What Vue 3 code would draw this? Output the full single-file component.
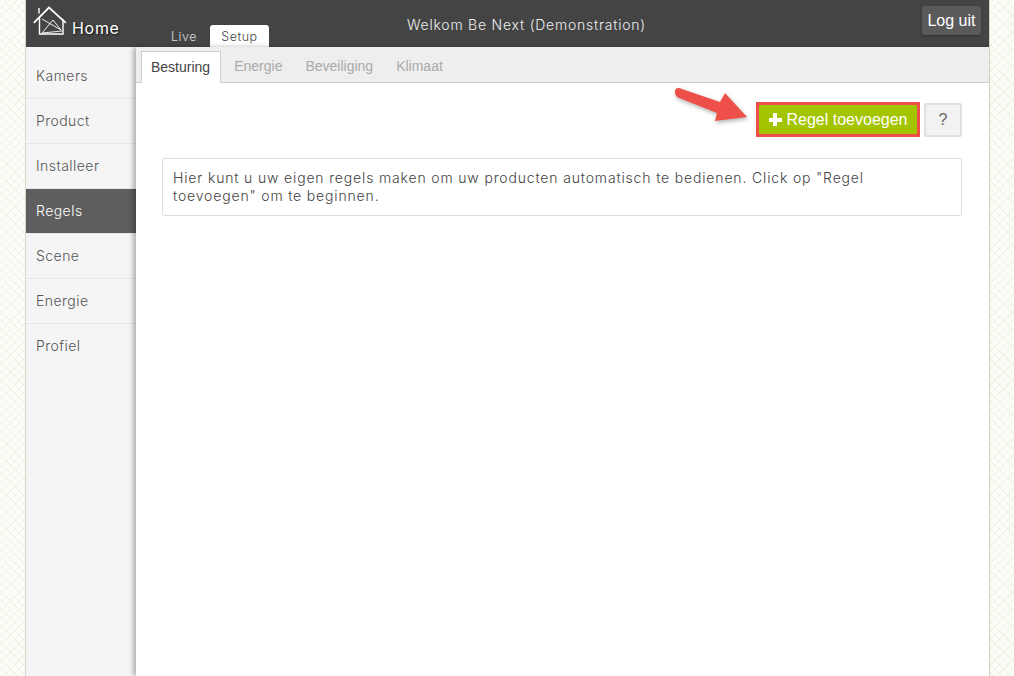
<script setup>
const navItems = ['Kamers', 'Product', 'Installeer', 'Regels', 'Scene', 'Energie', 'Profiel']
const subTabs = ['Besturing', 'Energie', 'Beveiliging', 'Klimaat']
</script>

<template>
  <div class="page">
    <div class="shell">
      <header class="topbar">
        <div class="brand">
          <svg class="logo" width="34" height="36" viewBox="0 0 34 36" fill="none" stroke="#fff">
            <path d="M0.800 22.800 16 7.500 32.800 22.800" stroke-width="1.800" />
            <path d="M6.500 17.500V34H30V19" stroke-width="1.400" />
            <path d="M6 8V13.500" stroke-width="1.400" />
            <path d="M9 19 28 30 20 20 9 33 29 31" stroke-width="0.900" />
          </svg>
          <span class="brand-name">Home</span>
        </div>
        <nav class="modes">
          <span class="mode">Live</span>
          <span class="mode active">Setup</span>
        </nav>
        <div class="welcome">Welkom Be Next (Demonstration)</div>
        <button class="logout">Log uit</button>
      </header>
      <div class="body">
        <aside class="side">
          <a v-for="item in navItems" :key="item" class="side-item" :class="{ active: item === 'Regels' }">{{ item }}</a>
        </aside>
        <main class="main">
          <div class="tabs">
            <span v-for="(t, i) in subTabs" :key="t" class="tab" :class="{ active: i === 0 }">{{ t }}</span>
          </div>
          <div class="content">
            <div class="actions">
              <button class="add"><span class="plus"></span>Regel toevoegen</button>
              <button class="help">?</button>
            </div>
            <div class="info">Hier kunt u uw eigen regels maken om uw producten automatisch te bedienen. Click op "Regel toevoegen" om te beginnen.</div>
          </div>
          <svg class="arrow" width="84" height="44" viewBox="0 0 84 44">
            <path d="M5 6 Q5.500 2.500 9 3 L50 17 L55 8 L77 32 L45 36 L47 28 L8 12.500 Q4.500 10 5 6Z" fill="#ee4f49" />
          </svg>
        </main>
      </div>
    </div>
  </div>
</template>

<style>
html, body { margin: 0; overflow: hidden; }
</style>

<style scoped>
.page {
  height: 676px;
  overflow: hidden;
  background-color: #fbfdf8;
  background-image:
    repeating-linear-gradient(45deg, #f0f5e8 0 1px, transparent 1px 6px),
    repeating-linear-gradient(-45deg, #f0f5e8 0 1px, transparent 1px 6px);
  font-family: Inter, sans-serif;
  font-weight: 300;
  font-size: 14px;
  color: #444;
}
.shell {
  box-sizing: border-box;
  width: 965px;
  height: 676px;
  margin-left: 25px;
  border-left: 1px solid #d3d8cd;
  border-right: 1px solid #d3d8cd;
  display: flex;
  flex-direction: column;
  background: #f5f5f5;
}
.topbar {
  height: 47px;
  flex: none;
  background: #444;
  display: flex;
  align-items: flex-start;
  position: relative;
  color: #fff;
}
.brand {
  width: 136px;
  flex: none;
  display: flex;
  align-items: flex-start;
  padding-left: 7px;
  box-sizing: border-box;
}
.logo { flex: none; }
.brand-name {
  font-size: 16px;
  font-weight: 400;
  letter-spacing: 0.7px;
  line-height: 20px;
  margin: 18px 0 0 5px;
  text-shadow: 1px 1px 2px #111;
}
.modes {
  display: flex;
  align-items: flex-end;
  height: 47px;
  padding-left: 9px;
  gap: 13px;
}
.mode {
  font-size: 12.500px;
  height: 22px;
  line-height: 24px;
  color: #ddd;
  box-sizing: border-box;
  letter-spacing: 0.5px;
}
.mode.active {
  background: #fff;
  color: #444;
  width: 59px;
  text-align: center;
  border-radius: 3px 3px 0 0;
}
.welcome {
  position: absolute;
  left: 381px;
  top: 16px;
  font-size: 14px;
  letter-spacing: 0.77px;
  line-height: 18px;
  color: #eee;
}
.logout {
  position: absolute;
  right: 8px;
  top: 6px;
  width: 59px;
  height: 29px;
  border: 0;
  border-radius: 3px;
  background: #5a5a5a;
  color: #fff;
  font: 16px "Liberation Sans", sans-serif;
  padding: 0;
  box-shadow: 0 1px 2px #333;
}
.body { flex: 1; display: flex; min-height: 0; }
.side {
  width: 110px;
  flex: none;
  padding-top: 7px;
  box-sizing: border-box;
}
.side-item {
  display: block;
  height: 45px;
  line-height: 43px;
  padding-left: 10px;
  font-size: 14px;
  letter-spacing: 0.45px;
  color: #555;
  border-bottom: 1px solid #e8e8e8;
  box-sizing: border-box;
}
.side-item:nth-child(n+7) { border-bottom: 0; }
.side-item.active { background: #5e5e5e; color: #fff; }
.main {
  flex: 1;
  position: relative;
  background: #fff;
  border-radius: 3px 0 0 0;
  box-shadow: -3px 0 5px rgba(0, 0, 0, 0.28);
  min-width: 0;
}
.tabs {
  height: 36px;
  box-sizing: border-box;
  background: #eee;
  border-bottom: 1px solid #ccc;
  border-radius: 3px 0 0 0;
  display: flex;
  align-items: flex-end;
  padding-left: 5px;
  gap: 3px;
}
.tab {
  height: 32px;
  padding: 0 10px;
  font: 14px/31px "Liberation Sans", sans-serif;
  color: #aaa;
  box-sizing: border-box;
  margin-bottom: -1px;
}
.tab.active {
  padding: 0 10px 0 9px;
  background: #fff;
  color: #444;
  border: 1px solid #ccc;
  border-bottom: 0;
}
.content { padding: 19px 27px 0 26px; }
.actions { display: flex; justify-content: flex-end; gap: 4px; align-items: center; }
.add {
  width: 164px;
  height: 35px;
  box-sizing: border-box;
  background: #a4c400;
  border: 3px solid #ee4f49;
  color: #fff;
  font: 16px "Liberation Sans", sans-serif;
  padding: 0;
  display: flex;
  align-items: center;
  justify-content: center;
  gap: 5px;
}
.plus {
  width: 13px;
  height: 13px;
  background:
    linear-gradient(#fff, #fff) center/13px 4px no-repeat,
    linear-gradient(#fff, #fff) center/4px 13px no-repeat;
}
.help {
  width: 38px;
  height: 34px;
  box-sizing: border-box;
  background: #f2f2f2;
  border: 2px solid #e0e0e0;
  border-radius: 2px;
  color: #666;
  font: 16px "Liberation Sans", sans-serif;
  padding: 0;
}
.info {
  margin-top: 21px;
  box-sizing: border-box;
  height: 58px;
  padding: 10px 20px 10px 10px;
  border: 1px solid #ddd;
  border-radius: 2px;
  font-size: 14px;
  letter-spacing: 0.84px;
  line-height: 18px;
  color: #444;
}
.arrow {
  position: absolute;
  left: 534px;
  top: 38px;
  filter: drop-shadow(1px 2px 2px rgba(0,0,0,0.3));
}
</style>
